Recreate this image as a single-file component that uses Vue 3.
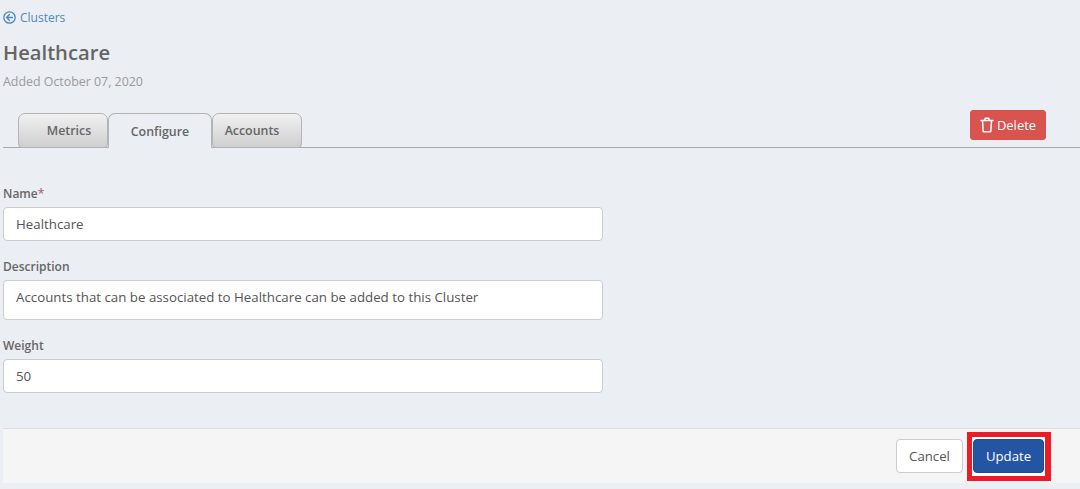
<template>
  <div class="page">
    <a class="back-link">
      <svg width="13" height="13" viewBox="0 0 24 24" fill="none" stroke="currentColor" stroke-width="2.4" stroke-linecap="round" stroke-linejoin="round"><circle cx="12" cy="12" r="10.5"/><path d="M12 6.5 6.5 12l5.5 5.5M6.5 12h11"/></svg>
      <span>Clusters</span>
    </a>
    <h1 class="title">{{ cluster.name }}</h1>
    <p class="added">Added {{ cluster.added }}</p>

    <div class="tab-row">
      <div class="tabs">
        <button
          v-for="tab in tabs"
          :key="tab.label"
          class="tab"
          :class="[tab.cls, { active: tab.label === 'Configure' }]"
        >{{ tab.label }}</button>
      </div>
      <button class="btn-delete">
        <svg width="14" height="16" viewBox="0 0 14 16" fill="none" stroke="currentColor" stroke-width="1.5" stroke-linecap="round" stroke-linejoin="round"><path d="M1 3.5h12M4.5 3.5 5.3 1.2h3.4l.8 2.3M2.5 3.5l.6 10.2c0 .7.5 1.1 1.1 1.1h5.6c.6 0 1.1-.4 1.1-1.1l.6-10.2"/></svg>
        <span>Delete</span>
      </button>
    </div>

    <form class="form" @submit.prevent>
      <label class="label">Name<span class="req">*</span></label>
      <input class="field" type="text" :value="cluster.name" />
      <label class="label">Description</label>
      <textarea class="field area" :value="cluster.description"></textarea>
      <label class="label">Weight</label>
      <input class="field" type="text" :value="cluster.weight" />
    </form>

    <div class="footer">
      <button class="btn-cancel">Cancel</button>
      <span class="highlight"><button class="btn-update">Update</button></span>
    </div>
  </div>
</template>

<script setup>
const cluster = {
  name: 'Healthcare',
  added: 'October 07, 2020',
  description: 'Accounts that can be associated to Healthcare can be added to this Cluster',
  weight: '50'
};

const tabs = [
  { label: 'Metrics', cls: 'tab-metrics' },
  { label: 'Configure', cls: 'tab-configure' },
  { label: 'Accounts', cls: 'tab-accounts' }
];
</script>

<style>
html, body {
  margin: 0;
  background: #ebeef3;
}
</style>

<style scoped>
.page {
  height: 489px;
  padding: 10px 0 0 3px;
  box-sizing: border-box;
  overflow: hidden;
  background: #ebeef3;
  font-family: "Open Sans", "Liberation Sans", sans-serif;
  font-size: 13px;
  color: #555;
}

.back-link {
  display: flex;
  align-items: center;
  gap: 4px;
  height: 15px;
  color: #4a8ab8;
  font-size: 12px;
}

.title {
  margin: 14px 0 0;
  height: 27px;
  line-height: 27px;
  font-size: 20.2px;
  font-weight: 600;
  color: #656565;
}

.added {
  margin: 7px 0 0;
  height: 17px;
  line-height: 17px;
  font-size: 12.4px;
  color: #999;
}

.tab-row {
  display: flex;
  justify-content: space-between;
  align-items: flex-start;
  height: 38px;
  margin-top: 19px;
  border-bottom: 1px solid #aaa;
  box-sizing: content-box;
}

.tabs {
  display: flex;
  margin: 4px 0 0 15px;
}

.tab {
  height: 35px;
  padding: 0;
  font: 600 12.4px "Open Sans", "Liberation Sans", sans-serif;
  color: #666;
  border: 1px solid #b4b4b4;
  border-radius: 7px 7px 4px 4px;
  background: linear-gradient(#f1f1f1, #cfcfcf);
}

.tab-metrics {
  width: 90px;
  padding-left: 12px;
}

.tab-configure {
  width: 104px;
}

.tab-accounts {
  width: 90px;
  padding-right: 10px;
}

.tab.active {
  border-bottom: none;
  border-radius: 7px 7px 0 0;
  background: #ebeef3;
}

.btn-delete {
  display: flex;
  align-items: center;
  justify-content: center;
  gap: 3px;
  width: 76px;
  height: 30px;
  margin: 1px 34px 0 0;
  padding: 0;
  border: 1px solid #d9534f;
  border-radius: 3px;
  background: #d9534f;
  color: #fff;
  font: 13px "Open Sans", "Liberation Sans", sans-serif;
}

.form {
  display: flex;
  flex-direction: column;
  width: 600px;
  padding-top: 37px;
}

.label {
  height: 17px;
  margin-bottom: 5px;
  line-height: 17px;
  font-size: 12px;
  font-weight: 600;
  color: #666;
}

.req {
  color: #b46a7c;
}

.field {
  display: block;
  box-sizing: border-box;
  width: 600px;
  height: 34px;
  margin: 0 0 17px;
  padding: 0 12px;
  border: 1px solid #ccc;
  border-radius: 4px;
  background: #fff;
  font: 13.3px "Open Sans", "Liberation Sans", sans-serif;
  color: #555;
  outline: none;
}

.area {
  height: 40px;
  padding-top: 7px;
  resize: none;
  overflow: hidden;
}

.footer {
  display: flex;
  align-items: center;
  justify-content: flex-end;
  gap: 4px;
  box-sizing: border-box;
  height: 55px;
  margin-top: 18px;
  padding-right: 29px;
  border-top: 1px solid #ddd;
  background: #f5f5f5;
}

.btn-cancel {
  width: 67px;
  height: 34px;
  padding: 0;
  border: 1px solid #ccc;
  border-radius: 4px;
  background: #fff;
  color: #555;
  font: 13.2px "Open Sans", "Liberation Sans", sans-serif;
}

.highlight {
  display: flex;
  padding: 2px 1px 3px;
  border: 5px solid #ed1c24;
  border-right-width: 6px;
  background: #fff;
}

.btn-update {
  width: 71px;
  height: 34px;
  padding: 0;
  border: 1px solid #204d8c;
  border-radius: 4px;
  background: #2455a4;
  color: #fff;
  font: 13.2px "Open Sans", "Liberation Sans", sans-serif;
}
</style>
